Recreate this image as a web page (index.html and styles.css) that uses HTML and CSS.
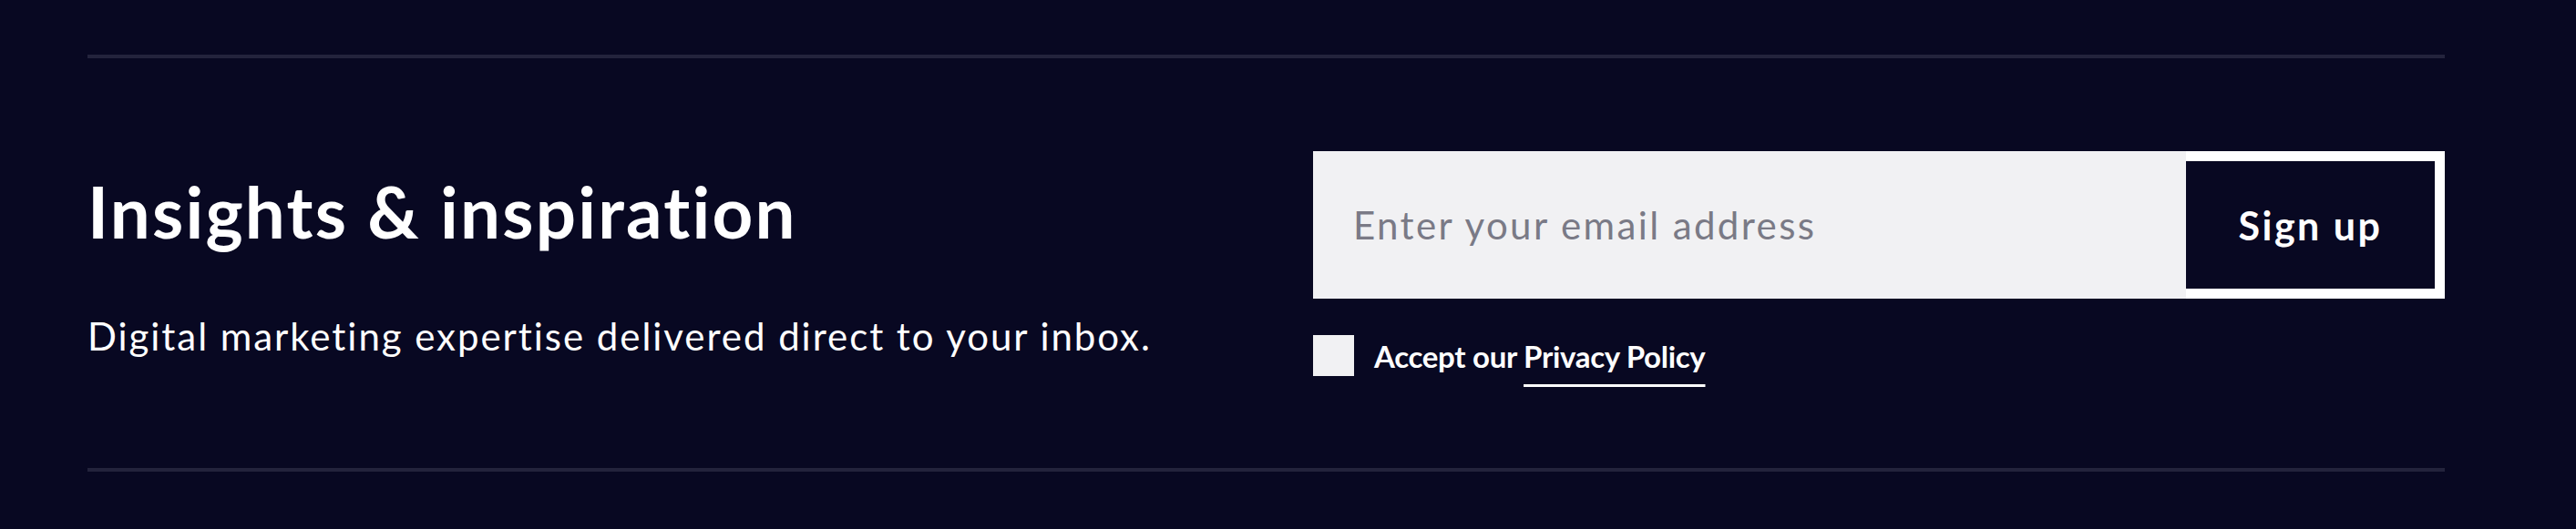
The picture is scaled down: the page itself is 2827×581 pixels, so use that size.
FILE: index.html
```html
<!DOCTYPE html>
<html lang="en">
<head>
<meta charset="utf-8">
<title>Insights &amp; inspiration</title>
<link rel="stylesheet" href="styles.css">
</head>
<body>
<section class="newsletter">
  <div class="rule"></div>
  <div class="row">
    <div class="intro">
      <h2 class="title">Insights &amp; inspiration</h2>
      <p class="lead">Digital marketing expertise delivered direct to your inbox.</p>
    </div>
    <form class="signup" onsubmit="return false;">
      <div class="field">
        <input class="email" type="email" placeholder="Enter your email address">
        <button class="submit" type="submit">Sign up</button>
      </div>
      <label class="consent">
        <span class="box"></span>
        <span class="consent-text">Accept our <a class="policy" href="#">Privacy Policy</a></span>
      </label>
    </form>
  </div>
  <div class="rule"></div>
</section>
</body>
</html>
```

FILE: styles.css
```css
html, body {
  margin: 0;
  padding: 0;
  background: #080822;
}

body {
  font-family: "Lato", "Noto Sans", sans-serif;
  color: #ffffff;
}

.newsletter {
  padding: 60px 144px 0 96px;
}

.rule {
  height: 4px;
  background: #23233c;
}

.row {
  display: grid;
  grid-template-columns: 1fr 1242px;
  padding: 102px 0 101px;
}

.intro {
  padding-top: 20px;
}

.title {
  margin: 0;
  font-size: 78px;
  font-weight: 700;
  line-height: 92px;
  letter-spacing: 2.2px;
}

.lead {
  margin: 66px 0 0;
  font-size: 42px;
  font-weight: 400;
  line-height: 50px;
  letter-spacing: 1.95px;
}

.signup {
  display: flex;
  flex-direction: column;
  gap: 40px;
}

.field {
  display: flex;
  height: 162px;
}

.email {
  flex: 1;
  min-width: 0;
  border: 0;
  margin: 0;
  padding: 0 0 0 44px;
  background: #f1f1f3;
  font-family: inherit;
  font-size: 42px;
  letter-spacing: 2.4px;
  color: #2a2a3a;
  outline: none;
}

.email::placeholder {
  color: #7a7a86;
  opacity: 1;
}

.submit {
  width: 284px;
  margin: 0;
  border: 11px solid #ffffff;
  border-left: 0;
  background: #080822;
  color: #ffffff;
  font-family: inherit;
  font-size: 43px;
  font-weight: 700;
  letter-spacing: 2.5px;
  padding: 0;
  cursor: pointer;
}

.consent {
  display: flex;
  align-items: center;
  gap: 22px;
  height: 45px;
  font-size: 33px;
  font-weight: 700;
  letter-spacing: -0.3px;
}

.box {
  width: 45px;
  height: 45px;
  background: #f1f1f3;
  flex: none;
}

.policy {
  color: #ffffff;
  text-decoration: underline;
  text-decoration-thickness: 3px;
  text-underline-offset: 18px;
}
```
